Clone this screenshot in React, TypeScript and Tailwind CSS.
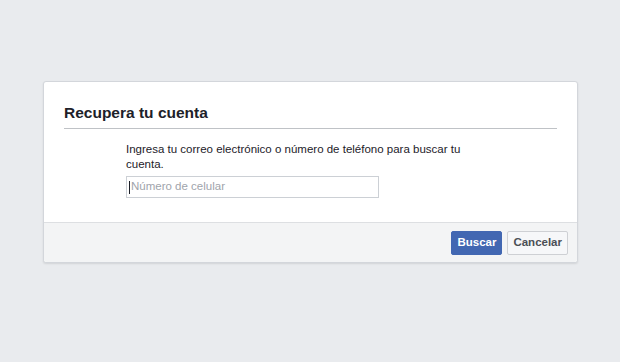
export default function App() {
  return (
    <div
      className="min-h-[362px] w-full bg-[#e9ebee] pt-[81px]"
      style={{ fontFamily: '"Liberation Sans", Arial, sans-serif' }}
    >
      <div className="ml-[43px] w-[535px] rounded-[3px] border border-[#d3d6db] bg-white shadow-[0_1px_2px_rgba(0,0,0,0.1)]">
        <div className="px-5 pt-[21px]">
          <div className="border-b border-[#bfc2c6] pb-[6px] text-[15.5px] font-bold leading-[19px] text-[#1d2129]">
            Recupera tu cuenta
          </div>
        </div>
        <div className="pb-[24px] pl-[82px] pt-[13px]">
          <div className="w-[345px] text-[11.5px] leading-[15px] text-[#1d2129]">
            Ingresa tu correo electrónico o número de teléfono para buscar tu cuenta.
          </div>
          <div className="mt-[4px] flex h-[22px] w-[253px] items-center border border-[#ccd0d5] bg-white pl-[2px]">
            <span className="mr-[1px] h-[13px] w-px bg-[#1d2129]" />
            <span className="text-[11.5px] text-[#a0a4ab]">Número de celular</span>
          </div>
        </div>
        <div className="flex justify-end gap-[5px] rounded-b-[3px] border-t border-[#dddfe2] bg-[#f3f4f5] pb-[7px] pl-[9px] pr-[9px] pt-[8px]">
          <button className="h-[24px] rounded-[2px] border border-[#4267b2] bg-[#4267b2] px-[5px] text-[11.5px] font-bold text-white">
            Buscar
          </button>
          <button className="h-[24px] rounded-[2px] border border-[#ced0d4] bg-[#f6f7f9] px-[5px] text-[11.5px] font-bold text-[#4b4f56]">
            Cancelar
          </button>
        </div>
      </div>
    </div>
  );
}
